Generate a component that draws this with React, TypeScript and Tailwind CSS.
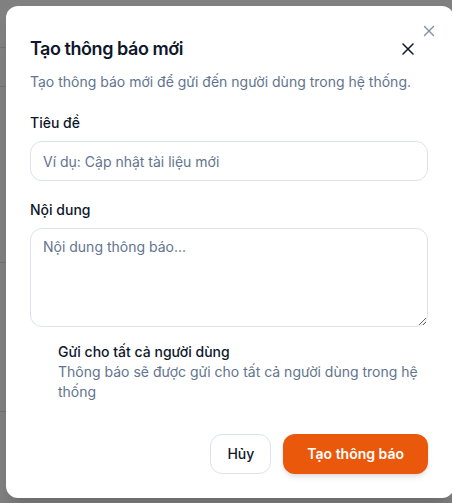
import { X } from "lucide-react";

const rows = [48, 39, 176, 149];

export default function App() {
  return (
    <div
      className="relative h-[503px] w-[452px] overflow-hidden bg-[#808080]"
      style={{ fontFamily: "Inter, 'Noto Sans', sans-serif" }}
    >
      {/* page behind the overlay */}
      <div className="flex flex-col">
        {rows.map((h, i) => (
          <div key={i} className="border-b border-[#727272]" style={{ height: h }} />
        ))}
      </div>

      <div className="absolute left-[6px] top-[6px] w-[448px] rounded-xl bg-white pb-6 pl-6 pr-[26px] pt-6 shadow-xl">
        <button className="absolute right-4 top-4 text-slate-500 opacity-80">
          <X size={18} strokeWidth={1.8} />
        </button>

        <div className="flex h-7 items-center justify-between pt-0 mt-[5px]">
          <h2 className="text-lg font-semibold leading-7 tracking-tight text-slate-900">
            Tạo thông báo mới
          </h2>
          <button className="mr-[10px] text-slate-900">
            <X size={20} strokeWidth={1.8} />
          </button>
        </div>
        <p className="mt-[9px] text-sm leading-5 text-slate-500">
          Tạo thông báo mới để gửi đến người dùng trong hệ thống.
        </p>

        <label className="mt-[21px] block text-sm font-medium leading-5 text-slate-900">
          Tiêu đề
        </label>
        <input
          className="mt-2 block h-10 w-full rounded-xl border border-[#dde2ec] px-3 text-sm text-slate-900 placeholder:text-slate-500 outline-none"
          placeholder="Ví dụ: Cập nhật tài liệu mới"
        />

        <label className="mt-[19px] block text-sm font-medium leading-5 text-slate-900">
          Nội dung
        </label>
        <textarea
          className="mt-2 block h-[99px] w-full rounded-xl border border-[#dde2ec] px-3 py-2 text-sm leading-5 text-slate-900 placeholder:text-slate-500 outline-none"
          placeholder="Nội dung thông báo..."
        />

        <div className="mt-[15px] flex gap-3">
          <div className="h-4 w-4 shrink-0" />
          <div>
            <p className="text-sm font-medium leading-5 text-slate-900">Gửi cho tất cả người dùng</p>
            <p className="text-sm leading-5 text-slate-500">
              Thông báo sẽ được gửi cho tất cả người dùng trong hệ thống
            </p>
          </div>
        </div>

        <div className="mt-8 flex justify-end gap-3">
          <button className="h-10 rounded-xl border border-[#dde2ec] bg-white px-4 text-sm font-medium text-slate-900">
            Hủy
          </button>
          <button className="h-10 rounded-xl bg-[#ea580c] px-6 text-sm font-semibold text-white shadow-md">
            Tạo thông báo
          </button>
        </div>
      </div>
    </div>
  );
}
